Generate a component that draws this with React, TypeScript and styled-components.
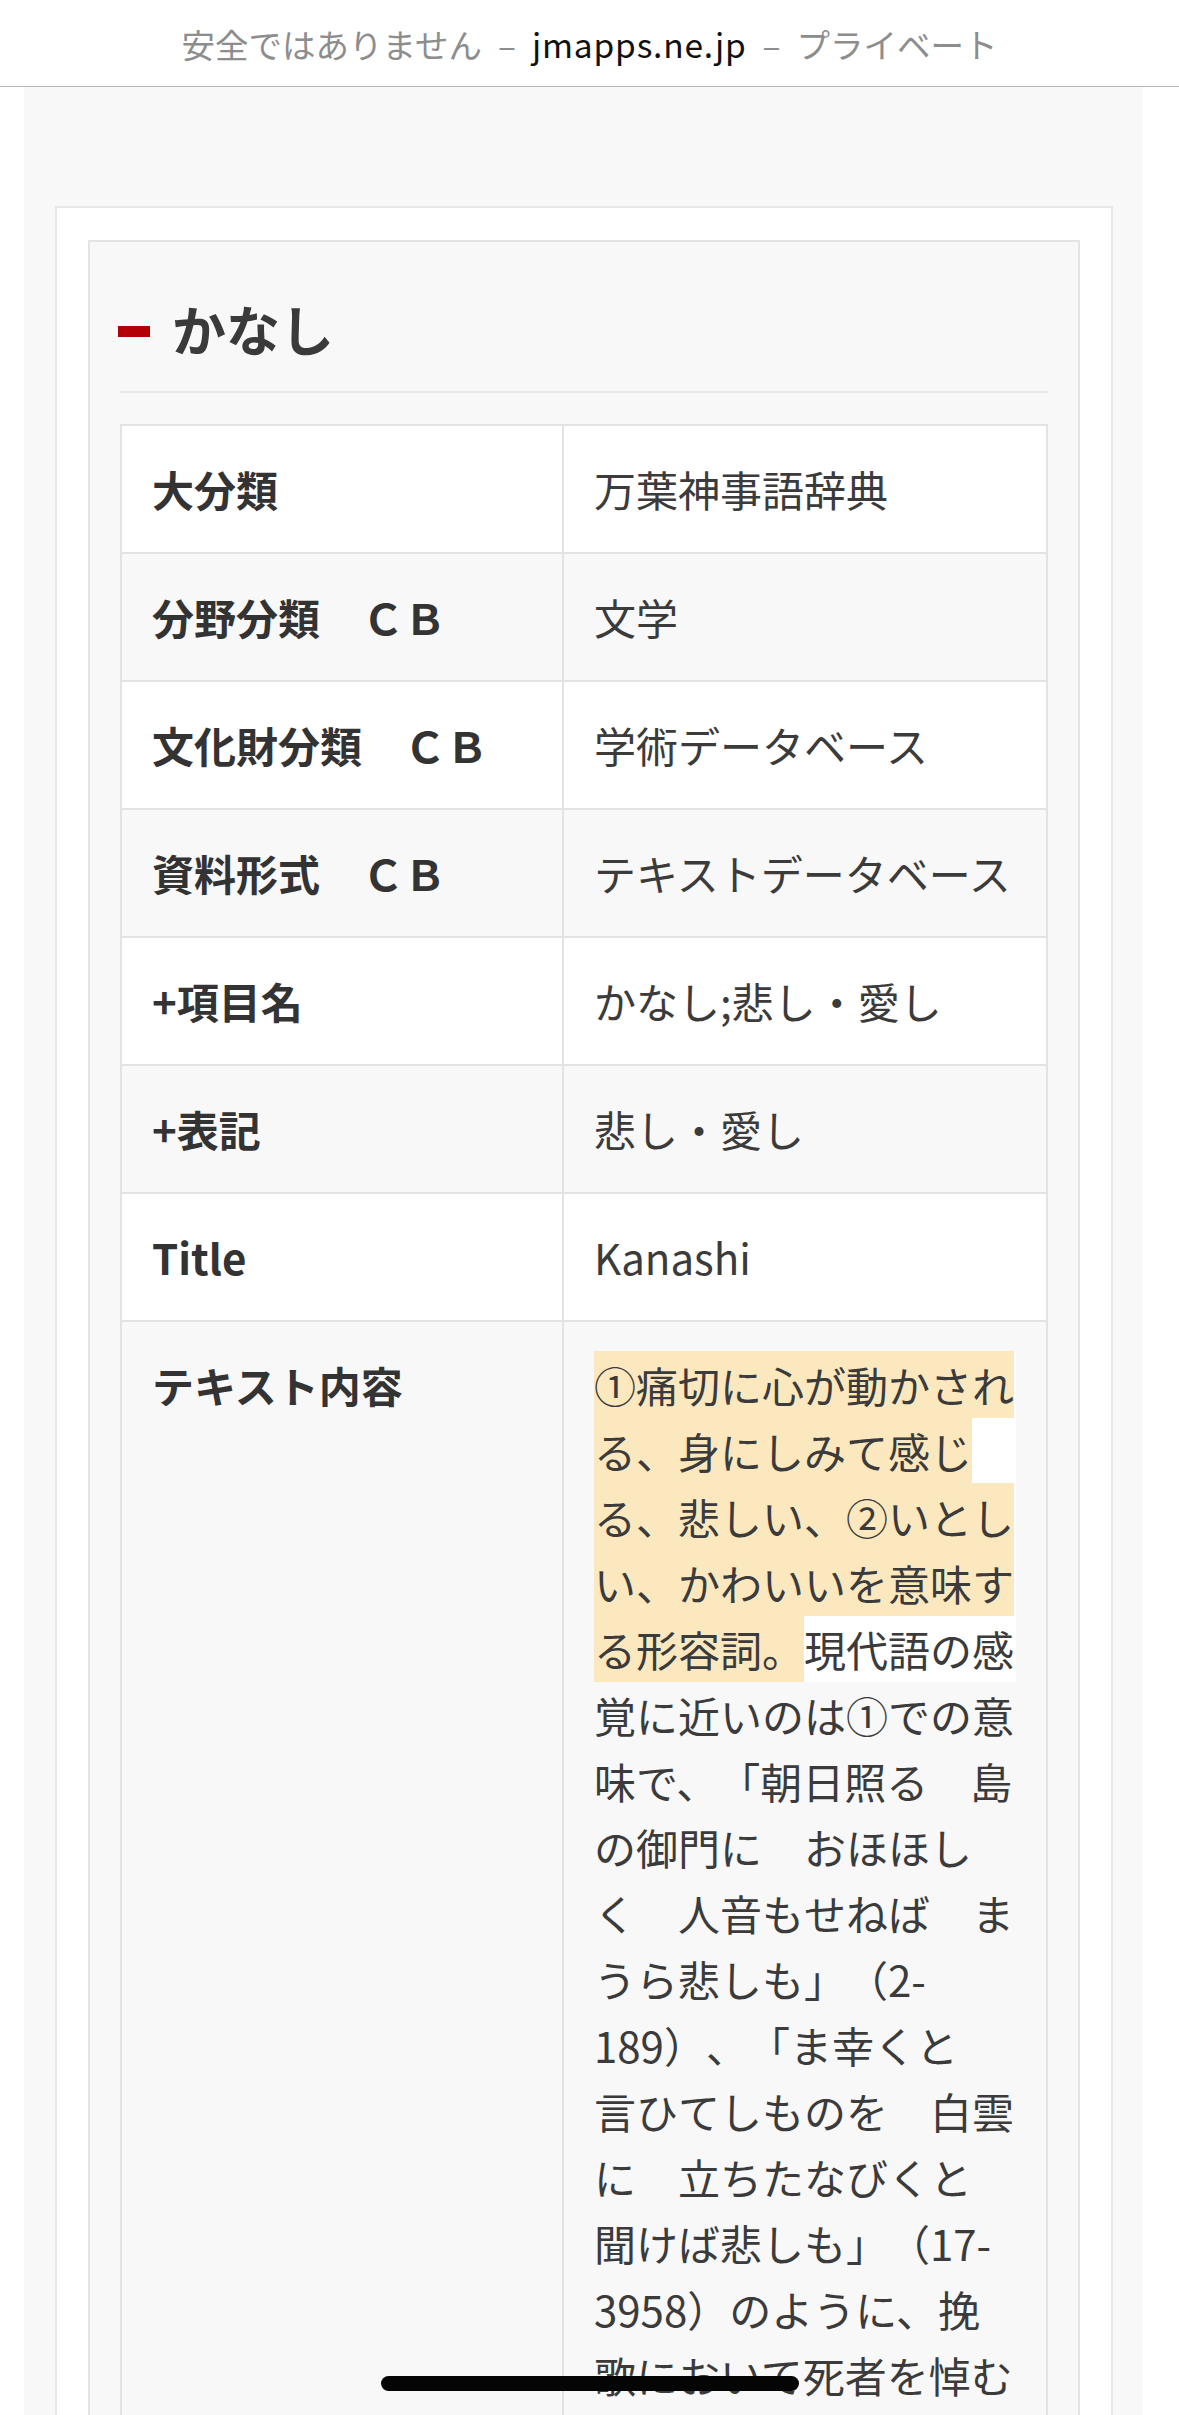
import React from "react";
import styled, { createGlobalStyle } from "styled-components";

interface Entry {
  label: string;
  value: React.ReactNode;
}

const GlobalStyle = createGlobalStyle`
  html, body {
    margin: 0;
    padding: 0;
    background: #fff;
  }
  body {
    font-family: "Noto Sans CJK JP", "Noto Sans", sans-serif;
    color: #333;
    -webkit-font-smoothing: antialiased;
    text-spacing-trim: space-all;
  }
`;

const AddressBar = styled.header`
  height: 86px;
  border-bottom: 1px solid #b8b8b8;
  display: flex;
  align-items: center;
  justify-content: center;
  font-size: 33.5px;
  color: #8d8d8d;
  white-space: nowrap;
`;

const Dash = styled.span`
  margin: 0 16px;
`;

const Domain = styled.span`
  color: #111;
  letter-spacing: 0.8px;
`;

const Page = styled.main`
  margin: 0 36px 0 24px;
  background: #f8f8f8;
  padding: 119px 30px 0 31px;
`;

const Card = styled.section`
  background: #fff;
  border: 2px solid #e8e8e8;
  padding: 32px 31px;
`;

const Panel = styled.div`
  background: #f8f8f8;
  border: 2px solid #e4e4e4;
  padding: 0 30px 32px;
`;

const Heading = styled.h2`
  margin: 46px 0 31px;
  padding-bottom: 22px;
  border-bottom: 2px solid #e6e6e6;
  font-size: 54px;
  line-height: 81px;
  font-weight: 700;
  color: #3a3a3a;
  display: flex;
  align-items: center;

  &::before {
    content: "";
    width: 32px;
    height: 11px;
    margin: 6px 22px 0 -2px;
    background: #b30007;
  }
`;

const Table = styled.table`
  width: 100%;
  border-collapse: collapse;
  table-layout: fixed;
  font-size: 42px;
  line-height: 66px;
`;

const Row = styled.tr<{ $shade: boolean }>`
  background: ${({ $shade }) => ($shade ? "#f8f8f8" : "#fff")};
`;

const Label = styled.th`
  width: 380px;
  padding: 30px;
  border: 2px solid #e3e3e3;
  text-align: left;
  vertical-align: top;
  font-weight: 700;
  color: #333;
`;

const Value = styled.td`
  padding: 30px;
  border: 2px solid #e3e3e3;
  vertical-align: top;
  color: #3b3b3b;
`;

const TextBody = styled.div`
  background: linear-gradient(#fff, #fff) 0 0 / 100% 330px no-repeat;
  line-break: strict;
  padding-bottom: 66px;
`;

const Mark = styled.span`
  background: #fbe8bf;
  padding: 3px 0;
`;

const HomeIndicator = styled.div`
  position: fixed;
  left: 50%;
  bottom: 24px;
  width: 418px;
  height: 15px;
  margin-left: -209px;
  border-radius: 8px;
  background: #050505;
`;

const longText = (
  <TextBody>
    <Mark>
      ①痛切に心が動かされる、身にしみて感じる、悲しい、②いとしい、かわいいを意味する形容詞。
    </Mark>
    現代語の感覚に近いのは①での意味で、「朝日照る　島の御門に　おほほし
    <br />
    く　人音もせねば　まうら悲しも」（2-<wbr />189）、「ま幸くと　言ひてしものを　白雲に　立ちたなびくと　聞けば悲しも」（17-<wbr />3958）のように、挽歌において死者を悼む
  </TextBody>
);

const entries: Entry[] = [
  { label: "大分類", value: "万葉神事語辞典" },
  { label: "分野分類　ＣＢ", value: "文学" },
  { label: "文化財分類　ＣＢ", value: "学術データベース" },
  { label: "資料形式　ＣＢ", value: "テキストデータベース" },
  { label: "+項目名", value: "かなし;悲し・愛し" },
  { label: "+表記", value: "悲し・愛し" },
  { label: "Title", value: "Kanashi" },
  { label: "テキスト内容", value: longText },
];

const App = (): JSX.Element => {
  return (
    <>
      <GlobalStyle />
      <AddressBar>
        安全ではありません<Dash>–</Dash>
        <Domain>jmapps.ne.jp</Domain>
        <Dash>–</Dash>プライベート
      </AddressBar>
      <Page>
        <Card>
          <Panel>
            <Heading>かなし</Heading>
            <Table>
              <tbody>
                {entries.map((entry, i) => (
                  <Row key={entry.label} $shade={i % 2 === 1}>
                    <Label>{entry.label}</Label>
                    <Value>{entry.value}</Value>
                  </Row>
                ))}
              </tbody>
            </Table>
          </Panel>
        </Card>
      </Page>
      <HomeIndicator />
    </>
  );
};

export default App;
